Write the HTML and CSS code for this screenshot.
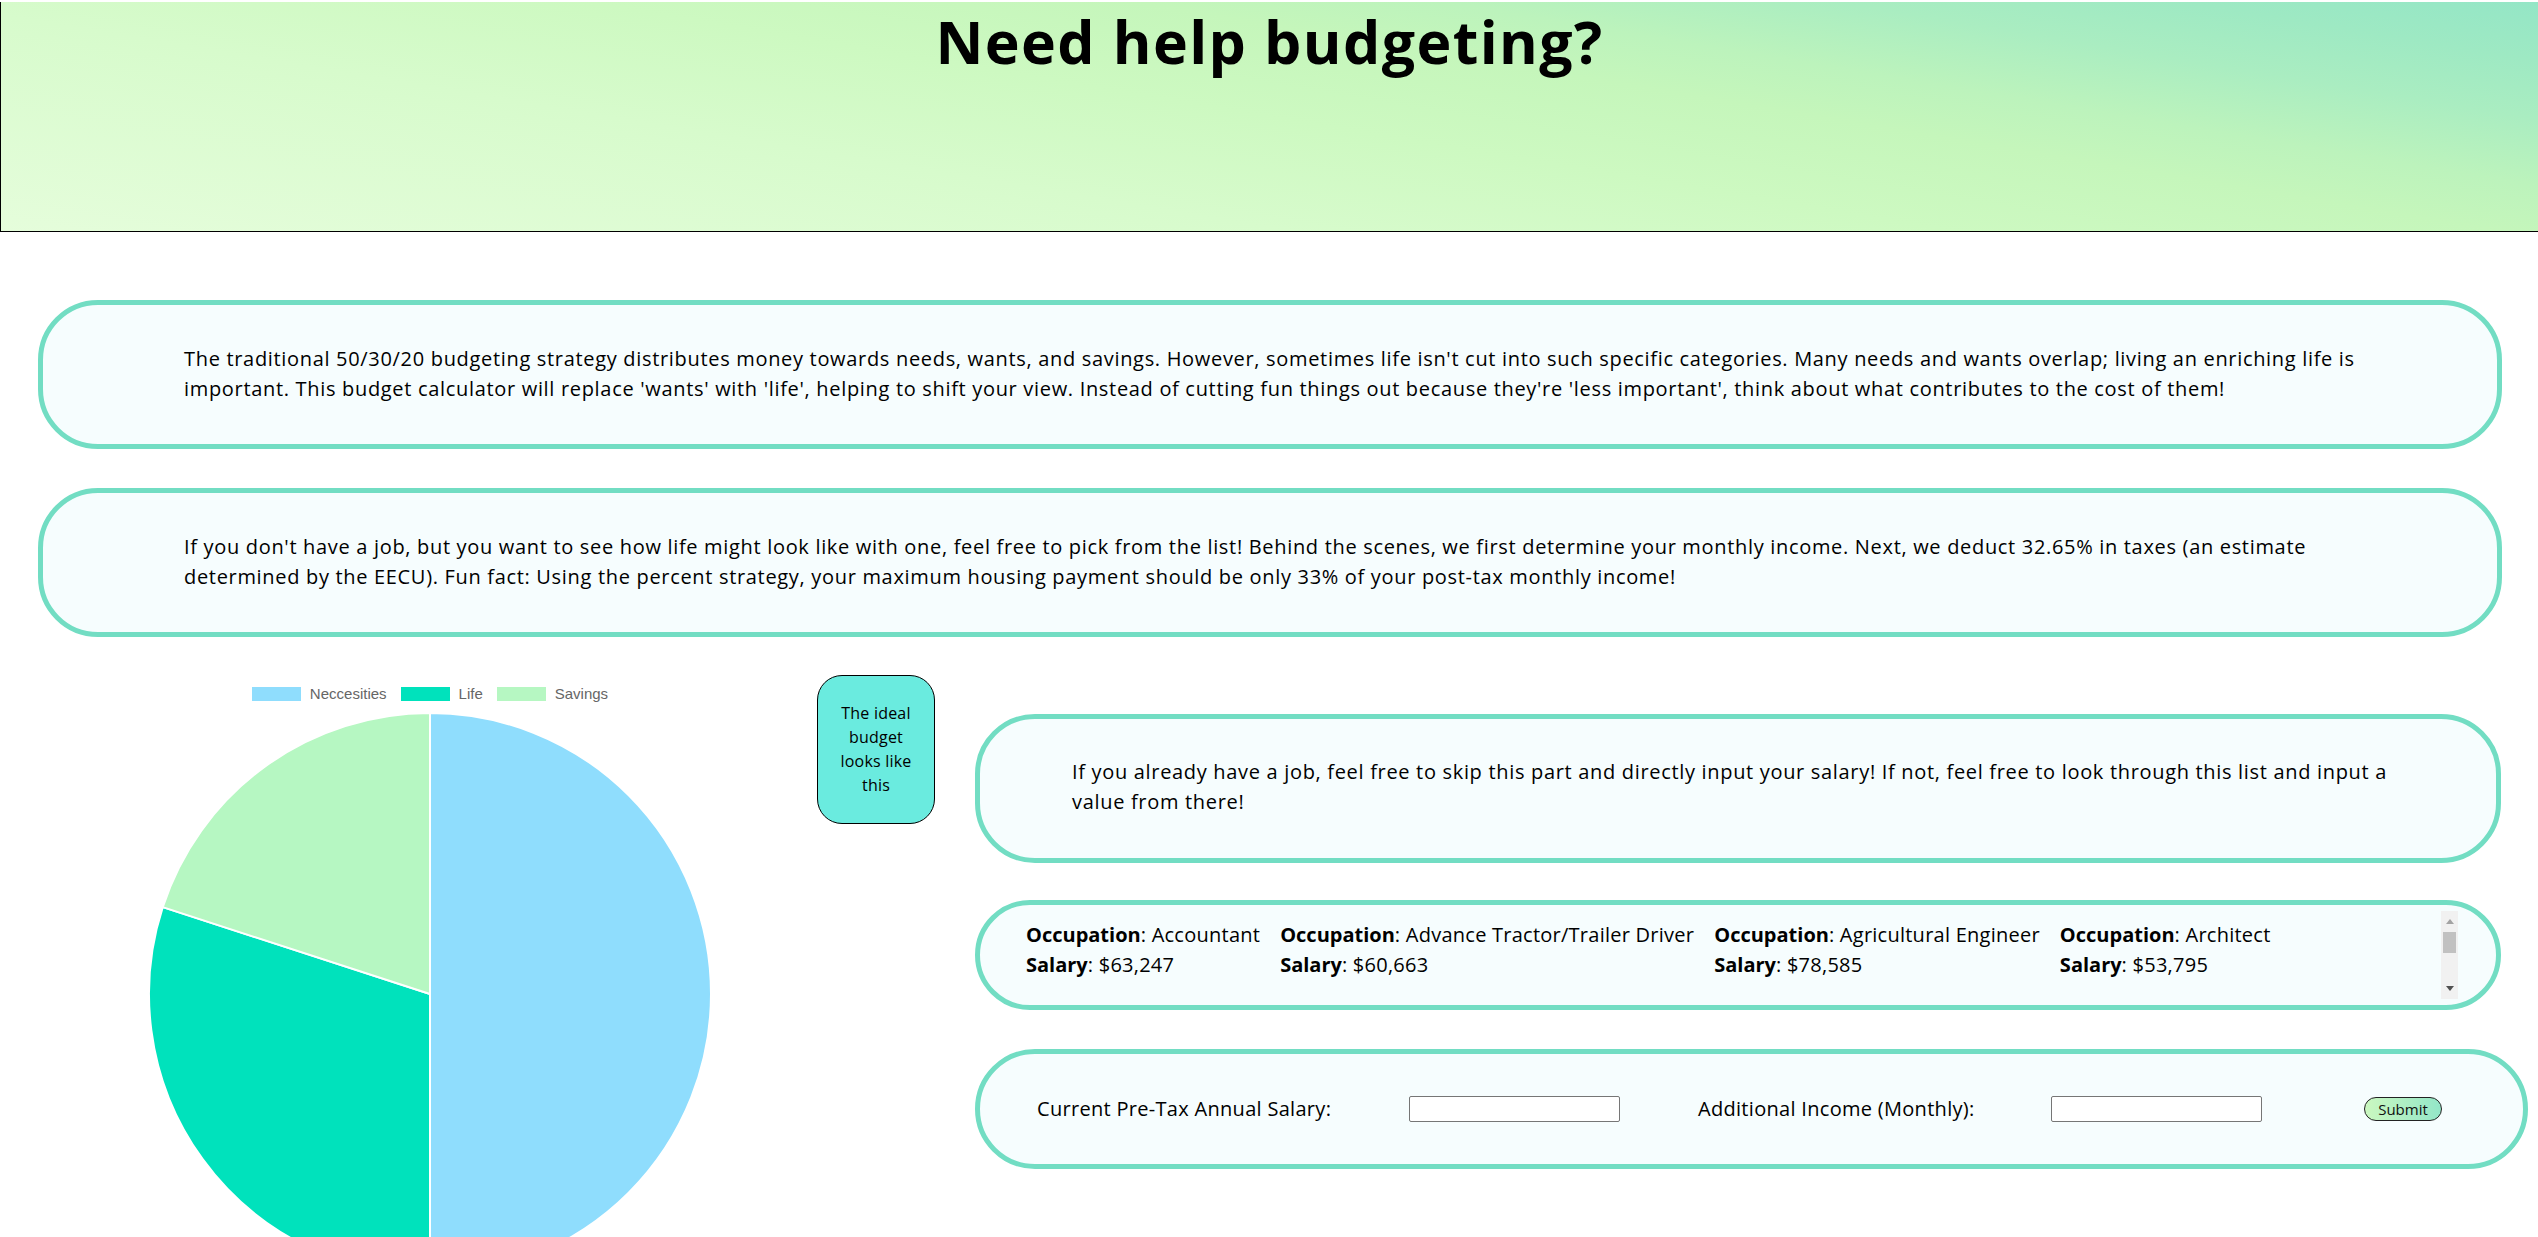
FILE: index.html
```html
<!DOCTYPE html>
<html lang="en">
<head>
<meta charset="utf-8">
<title>Budget Calculator</title>
<link rel="stylesheet" href="styles.css">
</head>
<body>
<header class="hero">
  <h1 class="hero-title">Need help budgeting?</h1>
</header>

<section class="card card-intro">
  <p>The traditional 50/30/20 budgeting strategy distributes money towards needs, wants, and savings. However, sometimes life isn't cut into such specific categories. Many needs and wants overlap; living an enriching life is important. This budget calculator will replace 'wants' with 'life', helping to shift your view. Instead of cutting fun things out because they're 'less important', think about what contributes to the cost of them!</p>
</section>

<section class="card card-intro card-intro-2">
  <p>If you don't have a job, but you want to see how life might look like with one, feel free to pick from the list! Behind the scenes, we first determine your monthly income. Next, we deduct 32.65% in taxes (an estimate determined by the EECU). Fun fact: Using the percent strategy, your maximum housing payment should be only 33% of your post-tax monthly income!</p>
</section>

<main class="calc">
  <div class="chart">
    <ul class="legend">
      <li class="legend-item"><span class="swatch swatch-needs"></span>Neccesities</li>
      <li class="legend-item"><span class="swatch swatch-life"></span>Life</li>
      <li class="legend-item"><span class="swatch swatch-save"></span>Savings</li>
    </ul>
    <svg class="pie" viewBox="0 0 562 562" width="562" height="562" aria-label="Budget pie chart">
      <path class="slice slice-needs" d="M281,281 L281,0 A281,281 0 0 1 281,562 Z"/>
      <path class="slice slice-life" d="M281,281 L281,562 A281,281 0 0 1 13.75,194.17 Z"/>
      <path class="slice slice-save" d="M281,281 L13.75,194.17 A281,281 0 0 1 281,0 Z"/>
    </svg>
  </div>

  <div class="ideal">The ideal budget looks like this</div>

  <div class="side">
    <section class="card card-side">
      <p>If you already have a job, feel free to skip this part and directly input your salary! If not, feel free to look through this list and input a value from there!</p>
    </section>

    <section class="card card-list">
      <div class="jobs">
        <div class="job"><b>Occupation</b>: Accountant<br><b>Salary</b>: $63,247</div>
        <div class="job"><b>Occupation</b>: Advance Tractor/Trailer Driver<br><b>Salary</b>: $60,663</div>
        <div class="job"><b>Occupation</b>: Agricultural Engineer<br><b>Salary</b>: $78,585</div>
        <div class="job"><b>Occupation</b>: Architect<br><b>Salary</b>: $53,795</div>
        <div class="job"><b>Occupation</b>: Auditor<br><b>Salary</b>: $61,400</div>
        <div class="job"><b>Occupation</b>: Automotive Mechanic<br><b>Salary</b>: $45,120</div>
        <div class="job"><b>Occupation</b>: Bank Teller<br><b>Salary</b>: $34,250</div>
        <div class="job"><b>Occupation</b>: Biologist<br><b>Salary</b>: $66,830</div>
        <div class="job"><b>Occupation</b>: Carpenter<br><b>Salary</b>: $47,060</div>
        <div class="job"><b>Occupation</b>: Chemist<br><b>Salary</b>: $72,410</div>
        <div class="job"><b>Occupation</b>: Civil Engineer<br><b>Salary</b>: $82,920</div>
        <div class="job"><b>Occupation</b>: Dental Hygienist<br><b>Salary</b>: $74,360</div>
      </div>
      <div class="scrollbar" aria-hidden="true">
        <div class="sb-btn"><span class="sb-arrow sb-arrow-up"></span></div>
        <div class="sb-track"><div class="sb-thumb"></div></div>
        <div class="sb-btn"><span class="sb-arrow sb-arrow-down"></span></div>
      </div>
    </section>

    <form class="card card-form">
      <label class="field-label field-label-1" for="salary">Current Pre-Tax Annual Salary:</label>
      <input class="field-input" type="text" id="salary">
      <label class="field-label field-label-2" for="extra">Additional Income (Monthly):</label>
      <input class="field-input" type="text" id="extra">
      <button class="submit" type="button">Submit</button>
    </form>
  </div>
</main>
</body>
</html>
```
FILE: styles.css
```css
body {
  margin: 0;
  font-family: "Open Sans", "Noto Sans", sans-serif;
  color: #000;
  background: #fff;
}

.hero {
  height: 229px;
  border-left: 1px solid #000;
  border-bottom: 1px solid #000;
  background: linear-gradient(9.5deg, #e5fddb 0%, #d7fbcc 33%, #cdf9c1 50%, #c5f6bb 64%, #bcf3bc 72%, #aaedc1 82%, #9ee9c3 91%, #94e6c6 100%);
}

.hero-title {
  margin: 2px 0 0;
  text-align: center;
  font-size: 59px;
  line-height: 79px;
  font-weight: 700;
  letter-spacing: 1.4px;
}

.card {
  box-sizing: border-box;
  border: 5px solid #72ddc3;
  background: #f6fdfe;
  border-radius: 60px;
}

.card p {
  margin: 0;
  font-size: 20px;
  line-height: 30px;
  letter-spacing: 0.68px;
}

.card-intro {
  width: 2464px;
  height: 149px;
  margin: 68px 0 0 38px;
  padding: 39px 141px 0;
}

.card-intro-2 {
  margin-top: 39px;
}

.calc {
  display: flex;
  align-items: flex-start;
  margin-top: 38px;
}

.chart {
  width: 774px;
  margin-left: 43px;
  display: flex;
  flex-direction: column;
  align-items: center;
}

.legend {
  list-style: none;
  margin: 12px 0 0;
  padding: 0;
  display: flex;
  gap: 14px;
  height: 14px;
  font-family: "Liberation Sans", Arial, sans-serif;
  font-size: 15px;
  line-height: 14px;
  color: #666;
}

.legend-item {
  display: flex;
  align-items: center;
  gap: 9px;
}

.swatch {
  display: block;
  width: 49px;
  height: 14px;
}

.swatch-needs { background: #8fddfd; }
.swatch-life { background: #00e2bc; }
.swatch-save { background: #b6f7c2; }

.pie {
  display: block;
  margin-top: 12px;
  width: 562px;
  height: 562px;
  overflow: visible;
}

.slice {
  stroke: #fff;
  stroke-width: 2;
  stroke-linejoin: round;
}

.slice-needs { fill: #8fddfd; }
.slice-life { fill: #00e2bc; }
.slice-save { fill: #b6f7c2; }

.ideal {
  box-sizing: border-box;
  flex: none;
  width: 118px;
  height: 149px;
  border: 1px solid #000;
  border-radius: 25px;
  background: #6aebdf;
  padding: 25px 16px 0;
  text-align: center;
  font-size: 16px;
  line-height: 24px;
  letter-spacing: 0.2px;
}

.side {
  flex: none;
  width: 1526px;
  margin-left: 40px;
  padding-top: 39px;
}

.card-side {
  height: 149px;
  padding: 38px 92px 0;
}

.card-list {
  display: flex;
  margin-top: 37px;
  height: 110px;
  padding: 6px 38px 6px 46px;
  border-radius: 55px;
}

.jobs {
  box-sizing: border-box;
  flex: 1;
  height: 88px;
  overflow: hidden;
  display: flex;
  flex-wrap: wrap;
  align-content: flex-start;
  column-gap: 20px;
  row-gap: 20px;
  padding-top: 9px;
  font-size: 20px;
  line-height: 30px;
  letter-spacing: 0.25px;
}

.job b {
  font-weight: 700;
  letter-spacing: 0;
}

.scrollbar {
  flex: none;
  width: 17px;
  height: 88px;
  display: flex;
  flex-direction: column;
  background: #f1f1f1;
}

.sb-btn {
  height: 21px;
  display: flex;
  align-items: center;
  justify-content: center;
}

.sb-arrow {
  width: 0;
  height: 0;
  border-left: 4px solid transparent;
  border-right: 4px solid transparent;
}

.sb-arrow-up {
  border-bottom: 5px solid #a3a3a3;
}

.sb-arrow-down {
  border-top: 5px solid #505050;
}

.sb-track {
  flex: 1;
  padding: 0 2px;
}

.sb-thumb {
  height: 21px;
  background: #c1c1c1;
}

.card-form {
  margin-top: 39px;
  width: 1553px;
  height: 120px;
  display: flex;
  align-items: center;
  padding: 0 0 0 57px;
}

.field-label {
  font-size: 20px;
  line-height: 30px;
  letter-spacing: 0.3px;
}

.field-label-1 {
  width: 372px;
}

.field-label-2 {
  width: 353px;
  margin-left: 78px;
}

.field-input {
  box-sizing: border-box;
  width: 211px;
  height: 26px;
  margin: 0;
  border: 1px solid #767676;
  border-radius: 2px;
  background: #fff;
  padding: 1px 2px;
}

.submit {
  box-sizing: border-box;
  width: 78px;
  height: 24px;
  margin-left: 102px;
  padding: 0;
  border: 1px solid #222;
  border-radius: 12px;
  background: linear-gradient(90deg, #cbf8c0, #93e6c8);
  font-family: "Open Sans", sans-serif;
  font-size: 15px;
  line-height: 20px;
  color: #111;
}
```
